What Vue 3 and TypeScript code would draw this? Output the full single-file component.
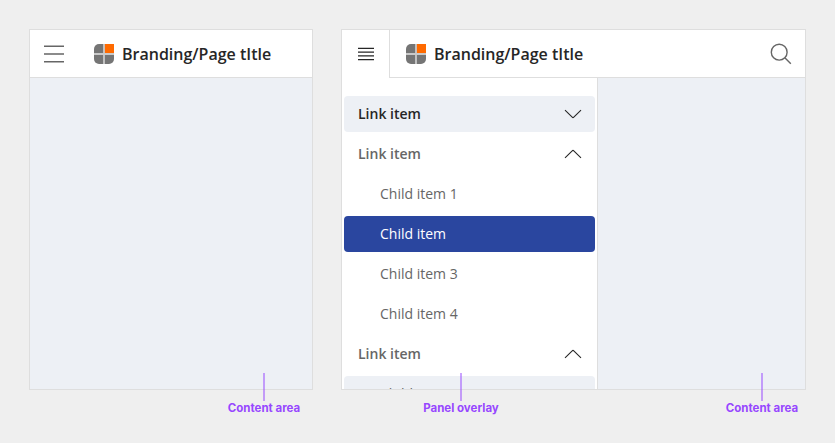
<script setup lang="ts">
import { ref } from 'vue'

interface NavItem {
  label: string
  level: 'link' | 'child'
  state?: 'highlighted' | 'hover' | 'selected'
  chevron?: 'up' | 'down'
}

const title = 'Branding/Page tItle'

const items = ref<NavItem[]>([
  { label: 'Link item', level: 'link', state: 'highlighted', chevron: 'down' },
  { label: 'Link item', level: 'link', chevron: 'up' },
  { label: 'Child item 1', level: 'child' },
  { label: 'Child item', level: 'child', state: 'selected' },
  { label: 'Child item 3', level: 'child' },
  { label: 'Child item 4', level: 'child' },
  { label: 'Link item', level: 'link', chevron: 'up' },
  { label: 'Child item', level: 'child', state: 'hover' },
])

const chevrons = {
  down: 'M1 4.2 8.2 11.2Q9 12 9.8 11.2L17 4.2',
  up: 'M1 11.8 8.2 4.8Q9 4 9.8 4.8L17 11.8',
}
</script>

<template>
  <main class="board">
    <section class="frame frame-small">
      <header class="bar">
        <button class="menu-button" aria-label="Open menu">
          <svg width="20" height="20" viewBox="0 0 20 20">
            <path d="M0 2.2H20M0 10H20M0 17.8H20" stroke="#666" stroke-width="1.6" />
          </svg>
        </button>
        <div class="brand">
          <svg class="logo" width="20" height="20" viewBox="0 0 20 20">
            <rect width="20" height="20" rx="5" fill="#757575" />
            <path d="M10 0H20V10H10Z" fill="#ff6a00" />
            <path d="M10 0V20M0 10H20" stroke="#c9c9c9" stroke-width="1.8" />
          </svg>
          <span class="title">{{ title }}</span>
        </div>
      </header>
      <div class="content"></div>
    </section>

    <section class="frame frame-large">
      <header class="bar">
        <button class="menu-button open" aria-label="Close menu">
          <svg width="16" height="16" viewBox="0 0 16 16">
            <path d="M0 2.3H16M0 6.1H16M0 9.9H16M0 13.7H16" stroke="#262626" stroke-width="1.3" />
          </svg>
        </button>
        <div class="brand">
          <svg class="logo" width="20" height="20" viewBox="0 0 20 20">
            <rect width="20" height="20" rx="5" fill="#757575" />
            <path d="M10 0H20V10H10Z" fill="#ff6a00" />
            <path d="M10 0V20M0 10H20" stroke="#c9c9c9" stroke-width="1.8" />
          </svg>
          <span class="title">{{ title }}</span>
        </div>
        <button class="search" aria-label="Search">
          <svg width="22" height="22" viewBox="0 0 22 22" fill="none" stroke="#666" stroke-width="1.4">
            <circle cx="9.2" cy="9.2" r="7.9" />
            <path d="M14.8 14.8 20.8 20.8" />
          </svg>
        </button>
      </header>
      <div class="body">
        <nav class="panel">
          <a v-for="(item, i) in items" :key="i" class="item" :class="[item.level, item.state]">
            <span>{{ item.label }}</span>
            <svg v-if="item.chevron" width="18" height="16" viewBox="0 0 18 16">
              <path :d="chevrons[item.chevron]" fill="none" stroke="#262626" stroke-width="1.1" />
            </svg>
          </a>
        </nav>
        <div class="content"></div>
      </div>
    </section>

    <div class="note note-first">Content area</div>
    <div class="note note-panel">Panel overlay</div>
    <div class="note note-last">Content area</div>
  </main>
</template>

<style>
body {
  background: #efefef;
}
</style>

<style scoped>
.board {
  position: relative;
  box-sizing: border-box;
  width: 835px;
  height: 443px;
  padding: 29px;
  display: flex;
  align-items: flex-start;
  gap: 28px;
  background: #efefef;
  font-family: 'Open Sans', 'Noto Sans', sans-serif;
  overflow: hidden;
}
.frame {
  box-sizing: border-box;
  flex: none;
  height: 361px;
  border: 1px solid #dedede;
  background: #fff;
  display: flex;
  flex-direction: column;
  overflow: hidden;
}
.frame-small { width: 284px; }
.frame-large { width: 465px; }
.bar {
  flex: none;
  display: flex;
  height: 48px;
}
button {
  border: 0;
  padding: 0;
  background: none;
}
.menu-button {
  box-sizing: border-box;
  width: 48px;
  height: 48px;
  display: flex;
  align-items: center;
  justify-content: center;
  border-bottom: 1px solid #dedede;
  padding-top: 1px;
}
.menu-button.open {
  border-bottom: 0;
  border-right: 1px solid #dedede;
  padding: 0 0 0 1px;
}
.brand {
  box-sizing: border-box;
  flex: 1;
  display: flex;
  align-items: center;
  gap: 8px;
  padding: 1px 0 0 16px;
  border-bottom: 1px solid #dedede;
}
.logo { display: block; }
.title {
  font-size: 16px;
  line-height: 24px;
  font-weight: 600;
  color: #262626;
  white-space: nowrap;
}
.search {
  box-sizing: border-box;
  width: 48px;
  padding: 1px 0 0 13px;
  display: flex;
  align-items: center;
  border-bottom: 1px solid #dedede;
}
.content {
  flex: 1;
  background: #edf0f5;
}
.body {
  flex: 1;
  min-height: 0;
  display: flex;
}
.panel {
  box-sizing: border-box;
  width: 256px;
  padding: 18px 2px 0;
  border-right: 1px solid #dedede;
  display: flex;
  flex-direction: column;
  gap: 4px;
  overflow: hidden;
}
.item {
  box-sizing: border-box;
  flex: none;
  height: 36px;
  padding: 0 13px 0 14px;
  border-radius: 4px;
  display: flex;
  align-items: center;
  justify-content: space-between;
  font-size: 14px;
  line-height: 20px;
  color: #666;
}
.link { font-weight: 600; }
.child { padding-left: 36px; }
.highlighted,
.hover {
  background: #edf0f5;
}
.highlighted {
  color: #262626;
}
.selected {
  background: #2a469f;
  color: #fff;
}
.note {
  position: absolute;
  top: 401px;
  width: 100px;
  text-align: center;
  font-family: Inter, 'Liberation Sans', sans-serif;
  font-size: 11.5px;
  line-height: 14px;
  font-weight: 700;
  color: #9747ff;
  white-space: nowrap;
}
.note::before {
  content: '';
  position: absolute;
  left: 49px;
  bottom: 14px;
  width: 2px;
  height: 28px;
  background: #9747ff;
  opacity: 0.5;
}
.note-first { left: 214px; }
.note-panel { left: 411px; }
.note-last { left: 712px; }
</style>
